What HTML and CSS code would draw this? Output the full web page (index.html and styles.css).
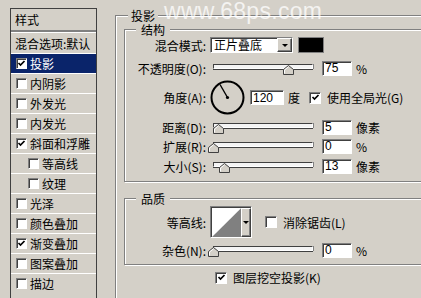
FILE: index.html
```html
<!DOCTYPE html>
<html lang="zh-CN">
<head>
  <meta charset="UTF-8">
  <title>图层样式 - 投影</title>
  <link rel="stylesheet" href="styles.css">
</head>
<body>
  <div class="dialog">
    <div class="style-list">
      <div class="list-head">样式</div>
      <div class="list-item blend">混合选项:默认</div>
      <div class="list-item active"><span class="cb small"><svg viewBox="0 0 9 9"><path d="M1.5 4 L3.5 6 L7.5 2"/></svg></span>投影</div>
      <div class="list-item"><span class="cb small"></span>内阴影</div>
      <div class="list-item"><span class="cb small"></span>外发光</div>
      <div class="list-item"><span class="cb small"></span>内发光</div>
      <div class="list-item"><span class="cb small"><svg viewBox="0 0 9 9"><path d="M1.5 4 L3.5 6 L7.5 2"/></svg></span>斜面和浮雕</div>
      <div class="list-item sub"><span class="cb small"></span>等高线</div>
      <div class="list-item sub"><span class="cb small"></span>纹理</div>
      <div class="list-item"><span class="cb small"></span>光泽</div>
      <div class="list-item"><span class="cb small"></span>颜色叠加</div>
      <div class="list-item"><span class="cb small"><svg viewBox="0 0 9 9"><path d="M1.5 4 L3.5 6 L7.5 2"/></svg></span>渐变叠加</div>
      <div class="list-item"><span class="cb small"></span>图案叠加</div>
      <div class="list-item"><span class="cb small"></span>描边</div>
    </div>

    <fieldset class="group outer">
      <legend>投影</legend>

      <fieldset class="group inner">
        <legend>结构</legend>
        <div class="rows">
          <div class="row">
            <span class="row-label">混合模式:</span>
            <div class="select">
              <span class="select-value">正片叠底</span>
              <span class="drop-btn"><i class="arrow"></i></span>
            </div>
            <span class="swatch"></span>
          </div>
          <div class="row opacity">
            <span class="row-label">不透明度(O):</span>
            <div class="slider"><div class="track"></div><svg class="thumb" style="left: 73px" viewBox="0 0 11 10"><path class="thumb-body" d="M0.5 9.5 V4.5 L5.5 0.5 L10.5 4.5 V9.5 Z"/><path class="thumb-hi" d="M1.5 8.5 V5 L5.5 1.8"/></svg></div>
            <input class="num" type="text" value="75">
            <span class="unit">%</span>
          </div>
          <div class="row angle">
            <span class="row-label">角度(A):</span>
            <svg class="dial" viewBox="0 0 35 35">
              <circle cx="17.5" cy="17.5" r="16" />
              <line x1="17.5" y1="17.5" x2="10" y2="4.5" />
              <circle class="hub" cx="17.5" cy="17.5" r="1.6" />
            </svg>
            <input class="num wide" type="text" value="120">
            <span class="unit">度</span>
            <span class="cb global"><svg viewBox="0 0 9 9"><path d="M1.5 4 L3.5 6 L7.5 2"/></svg></span>
            <span class="cb-text">使用全局光(G)</span>
          </div>
          <div class="row">
            <span class="row-label">距离(D):</span>
            <div class="slider"><div class="track"></div><svg class="thumb" style="left: 3px" viewBox="0 0 11 10"><path class="thumb-body" d="M0.5 9.5 V4.5 L5.5 0.5 L10.5 4.5 V9.5 Z"/><path class="thumb-hi" d="M1.5 8.5 V5 L5.5 1.8"/></svg></div>
            <input class="num" type="text" value="5">
            <span class="unit">像素</span>
          </div>
          <div class="row spread">
            <span class="row-label">扩展(R):</span>
            <div class="slider"><div class="track"></div><svg class="thumb" style="left: -2px" viewBox="0 0 11 10"><path class="thumb-body" d="M0.5 9.5 V4.5 L5.5 0.5 L10.5 4.5 V9.5 Z"/><path class="thumb-hi" d="M1.5 8.5 V5 L5.5 1.8"/></svg></div>
            <input class="num" type="text" value="0">
            <span class="unit">%</span>
          </div>
          <div class="row">
            <span class="row-label">大小(S):</span>
            <div class="slider"><div class="track"></div><svg class="thumb" style="left: 9px" viewBox="0 0 11 10"><path class="thumb-body" d="M0.5 9.5 V4.5 L5.5 0.5 L10.5 4.5 V9.5 Z"/><path class="thumb-hi" d="M1.5 8.5 V5 L5.5 1.8"/></svg></div>
            <input class="num" type="text" value="13">
            <span class="unit">像素</span>
          </div>
        </div>
      </fieldset>

      <fieldset class="group inner quality">
        <legend>品质</legend>
        <div class="rows">
          <div class="row contour-row">
            <span class="row-label">等高线:</span>
            <div class="contour">
              <svg class="contour-preview" viewBox="0 0 30 30" preserveAspectRatio="none">
                <rect width="30" height="30" fill="#fff"/>
                <path d="M0 30 L30 0 L30 30 Z" fill="#808080"/>
              </svg>
              <span class="contour-btn"><i class="arrow"></i></span>
            </div>
            <span class="cb anti"></span>
            <span class="cb-text">消除锯齿(L)</span>
          </div>
          <div class="row">
            <span class="row-label">杂色(N):</span>
            <div class="slider"><div class="track"></div><svg class="thumb" style="left: -2px" viewBox="0 0 11 10"><path class="thumb-body" d="M0.5 9.5 V4.5 L5.5 0.5 L10.5 4.5 V9.5 Z"/><path class="thumb-hi" d="M1.5 8.5 V5 L5.5 1.8"/></svg></div>
            <input class="num" type="text" value="0">
            <span class="unit">%</span>
          </div>
        </div>
      </fieldset>

      <div class="knockout">
        <span class="cb"><svg viewBox="0 0 9 9"><path d="M1.5 4 L3.5 6 L7.5 2"/></svg></span>
        <span class="cb-text">图层挖空投影(K)</span>
      </div>
    </fieldset>
  </div>
  <div class="watermark">www.68ps.com</div>
</body>
</html>
```

FILE: styles.css
```css
body {
  margin: 0;
  height: 298px;
  overflow: hidden;
  background: #d4d0c8;
  font-family: "Noto Sans CJK SC", "Liberation Sans", sans-serif;
  font-size: 12px;
  color: #000;
  position: relative;
}
.dialog {
  display: flex;
  align-items: flex-start;
}

/* left style list */
.style-list {
  margin: 8px 0 0 10px;
  width: 87px;
  height: 320px;
  box-sizing: border-box;
  border: 1px solid #404040;
  flex: none;
}
.list-head {
  height: 21px;
  line-height: 21px;
  padding-left: 4px;
  border-bottom: 2px solid #808080;
}
.list-item {
  display: flex;
  align-items: center;
  height: 19px;
  border-top: 1px solid #fff;
  padding-left: 5px;
  white-space: nowrap;
}
.list-item.blend {
  height: 20px;
  padding-left: 4px;
}
.list-item.sub {
  padding-left: 17px;
}
.list-item.active {
  background: #0a246a;
  color: #fff;
}
.list-item .cb {
  margin-right: 3px;
}

/* checkbox */
.cb {
  display: inline-flex;
  align-items: center;
  justify-content: center;
  width: 12px;
  height: 12px;
  box-sizing: border-box;
  background: #fff;
  border: 1px solid;
  border-color: #808080 #fff #fff #808080;
  box-shadow: inset 1px 1px #404040;
  flex: none;
}
.cb.small {
  width: 11px;
  height: 11px;
}
.cb svg {
  width: 9px;
  height: 9px;
}
.cb path {
  fill: none;
  stroke: #000;
  stroke-width: 1.7;
}
.cb-text {
  margin-left: 6px;
  white-space: nowrap;
}

/* group boxes */
.group {
  margin: 0;
  padding: 0;
  border: 1px solid #808080;
  box-shadow: inset 1px 1px #fff, 1px 1px #fff;
  min-width: 0;
}
.group legend {
  padding: 0 3px;
  line-height: 13px;
  background: #d4d0c8;
}
.outer {
  margin: 9px 0 0 18px;
  width: 360px;
  height: 330px;
  padding-left: 8px;
  flex: none;
}
.outer > legend {
  margin-left: 4px;
}
.inner {
  width: 330px;
  margin-top: 1px;
  padding-bottom: 7px;
}
.inner > legend {
  margin-left: 11px;
  padding: 0 5px;
}
.inner.quality {
  margin-top: 10px;
  padding-bottom: 6px;
}

/* form rows */
.rows {
  display: flex;
  flex-direction: column;
  gap: 4px;
  padding-top: 1px;
}
.row {
  display: flex;
  align-items: center;
  height: 16px;
  white-space: nowrap;
}
.row.opacity {
  margin-top: 3px;
}
.row.angle {
  height: 35px;
}
.row.spread {
  margin-top: -1px;
}
.row.contour-row {
  height: 32px;
}
.row-label {
  width: 81px;
  margin-right: 4px;
  text-align: right;
  flex: none;
}

.select {
  display: flex;
  width: 83px;
  height: 16px;
  box-sizing: border-box;
  background: #fff;
  border: 1px solid;
  border-color: #808080 #fff #fff #808080;
  box-shadow: inset 1px 1px #404040;
}
.select-value {
  flex: 1;
  padding-left: 3px;
  line-height: 14px;
}
.drop-btn,
.contour-btn {
  display: flex;
  align-items: center;
  justify-content: center;
  width: 15px;
  box-sizing: border-box;
  background: #d4d0c8;
  border: 1px solid;
  border-color: #fff #404040 #404040 #fff;
  box-shadow: inset -1px -1px #808080;
}
.arrow {
  width: 0;
  height: 0;
  border-top: 3px solid #000;
  border-left: 3px solid transparent;
  border-right: 3px solid transparent;
}
.swatch {
  width: 26px;
  height: 16px;
  box-sizing: border-box;
  margin-left: 5px;
  background: #000;
  border: 1px solid #808080;
}

.slider {
  position: relative;
  width: 106px;
  height: 16px;
  flex: none;
}
.track {
  margin: 4px 3px 0;
  height: 5px;
  box-sizing: border-box;
  background: #f4f4f4;
  border: 1px solid;
  border-color: #404040 #fff #fff #404040;
  box-shadow: 0 1px #404040, 1px 0 #808080;
}
.thumb {
  position: absolute;
  top: 5px;
  width: 11px;
  height: 10px;
}
.thumb-body {
  fill: #d4d0c8;
  stroke: #404040;
}
.thumb-hi {
  fill: none;
  stroke: #fff;
}

.num {
  width: 30px;
  height: 15px;
  box-sizing: border-box;
  margin: 0 0 0 6px;
  padding: 0 0 0 2px;
  background: #fff;
  border: 1px solid;
  border-color: #808080 #fff #fff #808080;
  box-shadow: inset 1px 1px #404040;
  font: 12px "Liberation Sans", sans-serif;
  color: #000;
  line-height: 13px;
  outline: none;
}
.num.wide {
  width: 34px;
  margin-left: 5px;
}
.unit {
  margin-left: 4px;
}
.dial {
  width: 35px;
  height: 35px;
  flex: none;
}
.dial circle {
  fill: none;
  stroke: #000;
  stroke-width: 2;
}
.dial line {
  stroke: #000;
  stroke-width: 1.4;
}
.dial .hub {
  fill: #000;
  stroke: none;
}
.cb.global {
  margin-left: 9px;
}
.cb.global + .cb-text {
  margin-left: 6px;
}

.contour {
  display: flex;
  width: 42px;
  height: 32px;
  box-sizing: border-box;
  border: 1px solid;
  border-color: #808080 #fff #fff #808080;
  box-shadow: inset 1px 1px #404040;
  padding: 1px 0 0 1px;
}
.contour-preview {
  width: 30px;
  height: 29px;
}
.contour-btn {
  width: 10px;
}
.cb.anti {
  margin-left: 13px;
}

.knockout {
  display: flex;
  align-items: center;
  height: 13px;
  margin-top: 6px;
  padding-left: 91px;
}

.watermark {
  position: absolute;
  left: 164px;
  top: -2px;
  font: 23px "Liberation Sans", sans-serif;
  color: rgba(255, 255, 255, 0.75);
  letter-spacing: 0.3px;
}
```
